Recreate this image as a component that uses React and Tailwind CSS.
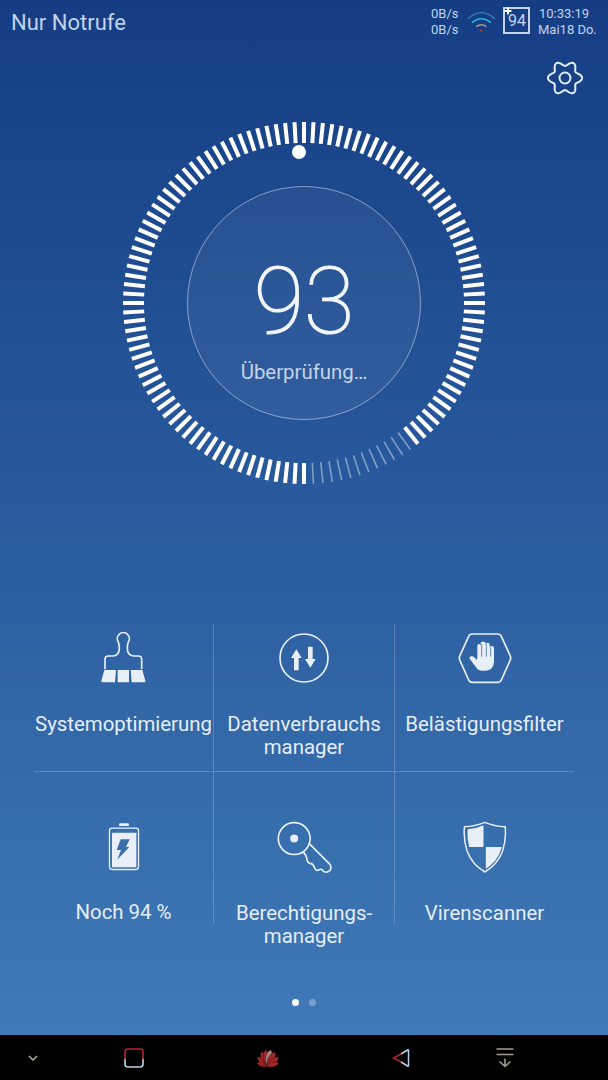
const ICON = "#e9eff7";

function gearPath() {
  const pts = [];
  for (let i = 0; i < 180; i++) {
    const t = (i / 180) * Math.PI * 2;
    const r = 14.6 + 2.5 * Math.cos(6 * t);
    pts.push(`${(20 + r * Math.cos(t)).toFixed(2)} ${(20 + r * Math.sin(t)).toFixed(2)}`);
  }
  return "M" + pts.join("L") + "Z";
}

function Gauge() {
  const ticks = [];
  for (let i = 0; i < 120; i++) {
    const a = i * 3;
    const dim = a >= 144 && a <= 177;
    ticks.push(
      <rect
        key={i}
        x={dim ? 181.2 : 180}
        y={1}
        width={dim ? 1.6 : 4}
        height={21}
        fill={dim ? "rgba(255,255,255,0.42)" : "#ffffff"}
        transform={`rotate(${a} 182 182)`}
      />
    );
  }
  return (
    <svg width="364" height="364" viewBox="0 0 364 364" className="block">
      {ticks}
      <circle cx="182" cy="182" r="116.5" fill="rgba(255,255,255,0.05)" stroke="rgba(255,255,255,0.45)" strokeWidth="1" />
      <circle cx="177" cy="31" r="7" fill="#ffffff" />
    </svg>
  );
}

const Broom = () => (
  <svg width="47" height="52" viewBox="60 36 141 156">
    <path d="M75 148V117Q75 108 85 108H100Q118 106 118 85Q118 74 115 66A18 18 0 1 1 145 66Q142 74 142 85Q142 106 160 108H175Q185 108 185 117V148" fill="none" stroke={ICON} strokeWidth="5" strokeLinejoin="round" />
    <path d="M73 150H108L105 187H68Q63 187 64 182Z M113 150H147V187H113Z M152 150H187L196 182Q197 187 192 187H155Z" fill={ICON} />
  </svg>
);
const Arrows = () => (
  <svg width="52" height="52" viewBox="0 0 156 156">
    <circle cx="78" cy="78" r="72" fill="none" stroke={ICON} strokeWidth="5" />
    <path d="M55 52L71 78H62V115H48V78H39Z" fill={ICON} />
    <path d="M95 107L79 81H88V44H102V81H111Z" fill={ICON} transform="translate(2 0)" />
  </svg>
);
const Hand = () => (
  <svg width="54" height="52" viewBox="53 24 162 156">
    <path d="M59 94L85 37Q88 30 96 30H172Q180 30 183 37L209 94Q213 102 209 110L183 168Q180 175 172 175H96Q88 175 85 168L59 110Q55 102 59 94Z" fill="none" stroke={ICON} strokeWidth="5" />
    <path d="M111 100V66Q111 60 116 60Q121 60 121 66V58Q121 53 126 53H131Q136 53 136 58V62Q137 56 142 56Q148 56 148 62V70Q149 66 155 66Q161 66 161 72V112Q161 140 135 140H125Q113 140 106 128L89 106Q85 99 92 97Q97 95 102 100L109 108Z" fill={ICON} />
    <path d="M124 60V98M138 60V98M151 70V98" stroke="#2f64a5" strokeWidth="2.2" />
  </svg>
);
const Battery = () => (
  <svg width="32" height="50" viewBox="54 38 96 150">
    <rect x="87" y="42" width="30" height="8" rx="3" fill={ICON} />
    <rect x="58.5" y="56.5" width="87" height="124" rx="8" fill="none" stroke={ICON} strokeWidth="4" />
    <rect x="66" y="70" width="73" height="104" rx="2" fill={ICON} />
    <path d="M92 90H119L108 113H118L82 151L93 122H80Z" fill="#3a70ae" />
  </svg>
);
const Key = () => (
  <svg width="55" height="53" viewBox="560 35 166 158">
    <circle cx="612" cy="87" r="48" fill="none" stroke={ICON} strokeWidth="5" />
    <circle cx="612" cy="87" r="12" fill={ICON} />
    <path d="M656 101L720 165Q726 175 719 184Q710 192 700 186Q695 176 686 182Q676 186 672 172Q668 162 660 162Q650 160 650 146Q648 138 640 128" fill="none" stroke={ICON} strokeWidth="5" strokeLinejoin="round" />
  </svg>
);
const Shield = () => (
  <svg width="44" height="52" viewBox="42 34 131 156">
    <path d="M107 38Q136 50 168 51Q172 90 160 125Q145 165 107 187Q69 165 54 125Q42 90 46 51Q78 50 107 38Z" fill="none" stroke={ICON} strokeWidth="4.5" strokeLinejoin="round" />
    <path d="M103 47V112H60Q53 85 55 59Q80 58 103 47Z" fill={ICON} />
    <path d="M110 112H158Q146 156 110 177Z" fill={ICON} />
  </svg>
);

const Wifi = () => (
  <svg width="29" height="22" viewBox="200 24 87 66">
    <path d="M203 50Q243 14 283 50" fill="none" stroke="#3f7fc0" strokeWidth="4" />
    <path d="M215 62Q243 38 271 62" fill="none" stroke="#25b6dc" strokeWidth="4.5" />
    <path d="M228 74Q243 62 258 74" fill="none" stroke="#a89a8c" strokeWidth="4.5" />
    <circle cx="243" cy="86" r="3.5" fill="#c0392b" />
  </svg>
);

const petals = [
  { a: -78, s: 0.72 },
  { a: -52, s: 0.86 },
  { a: -27, s: 0.96 },
  { a: -9, s: 1 },
  { a: 9, s: 1 },
  { a: 27, s: 0.96 },
  { a: 52, s: 0.86 },
  { a: 78, s: 0.72 },
];
const Huawei = () => (
  <svg width="26" height="20" viewBox="0 0 26 20">
    {petals.map(({ a, s }) => (
      <path
        key={a}
        d="M13 19C8 13 9 5 13 1.5C17 5 18 13 13 19Z"
        fill={a === 9 ? "#a8908a" : "#a3262b"}
        stroke="#000000"
        strokeWidth="0.3"
        transform={`rotate(${a} 13 17.5) translate(13 19) scale(${s}) translate(-13 -19)`}
      />
    ))}
  </svg>
);

const items = [
  { icon: <Broom />, label: ["Systemoptimierung"] },
  { icon: <Arrows />, label: ["Datenverbrauchs", "manager"] },
  { icon: <Hand />, label: ["Belästigungsfilter"] },
  { icon: <Battery />, label: ["Noch 94 %"] },
  { icon: <Key />, label: ["Berechtigungs-", "manager"] },
  { icon: <Shield />, label: ["Virenscanner"] },
];

function Cell({ item, top, width, divider, height }) {
  return (
    <div className={`flex flex-col items-center ${width} ${height} ${top} ${divider ? "border-r border-white/20" : ""}`}>
      <div className="flex h-[52px] items-center justify-center">{item.icon}</div>
      <div className="mt-[29px] text-center text-[20.4px] leading-[23px] whitespace-nowrap text-[#e6edf5]">
        {item.label.map((l) => (
          <div key={l}>{l}</div>
        ))}
      </div>
    </div>
  );
}

export default function App() {
  return (
    <div className="flex h-[1080px] w-[608px] flex-col overflow-hidden bg-black font-['Roboto',sans-serif]">
      <div className="flex h-[1035px] flex-col bg-gradient-to-b from-[#153d84] to-[#407ab8]">
        <div className="flex h-[44px] items-center">
          <div className="ml-[11px] w-[115px] whitespace-nowrap text-[22px] text-[#c3d3e8]">Nur Notrufe</div>
          <div className="ml-[305px] w-[32px] text-[13px] leading-[16px] text-[#c3d3e8]">
            <div>0B/s</div>
            <div>0B/s</div>
          </div>
          <div className="ml-[4px] -mt-[3px]"><Wifi /></div>
          <div className="relative ml-[7px] flex h-[27px] w-[27px] items-center justify-center border-2 border-[#c3d3e8] pt-[2px] pl-[1px] text-[16px] text-[#c3d3e8] -mt-[4px]">
            94
            <svg width="8" height="8" viewBox="0 0 8 8" className="absolute -top-[2px] -left-[1px]">
              <path d="M4 0.5V7.5M0.5 4H7.5" stroke="#ffffff" strokeWidth="2" />
            </svg>
          </div>
          <div className="ml-[8px] text-[13px] leading-[16px] text-[#c3d3e8] whitespace-nowrap">
            <div className="pl-px">10:33:19</div>
            <div>Mai18 Do.</div>
          </div>
        </div>

        <div className="mt-[14px] flex justify-end pr-[23px]">
          <svg width="40" height="40" viewBox="0 0 40 40">
            <path d={gearPath()} fill="none" stroke="#e3ebf5" strokeWidth="2" />
            <circle cx="20" cy="20" r="5.5" fill="none" stroke="#e3ebf5" strokeWidth="2" />
          </svg>
        </div>

        <div className="relative mt-[23px] ml-[122px] h-[364px] w-[364px]">
          <Gauge />
          <div className="absolute inset-0 flex flex-col items-center">
            <div className="mt-[126px] text-[92px] leading-[110px] font-thin text-[#f2f6fb] [-webkit-text-stroke:1.2px_#f2f6fb]">93</div>
            <div className="mt-[3px] text-[20.4px] leading-[24px] text-[#c3d3e8]">Überprüfung…</div>
          </div>
        </div>

        <div className="mt-[139px] ml-[34px] w-[540px]">
          <div className="flex h-[148px] border-b border-white/20">
            <Cell item={items[0]} width="w-[180px]" height="h-[147px]" top="pt-[8px]" divider />
            <Cell item={items[1]} width="w-[181px]" height="h-[147px]" top="pt-[8px]" divider />
            <Cell item={items[2]} width="w-[179px]" height="h-[147px]" top="pt-[8px]" />
          </div>
          <div className="flex h-[152px]">
            <Cell item={items[3]} width="w-[180px]" height="h-[152px]" top="pt-[49px]" divider />
            <Cell item={items[4]} width="w-[181px]" height="h-[152px]" top="pt-[49px]" divider />
            <Cell item={items[5]} width="w-[179px]" height="h-[152px]" top="pt-[49px]" />
          </div>
        </div>

        <div className="mt-[75px] flex justify-center gap-[10px] pr-[1px]">
          <div className="h-[7px] w-[7px] rounded-full bg-white"></div>
          <div className="h-[7px] w-[7px] rounded-full bg-white/30"></div>
        </div>
      </div>

      <div className="flex h-[45px] items-center bg-black">
        <svg width="10" height="6" viewBox="0 0 10 6" className="ml-[28px]">
          <path d="M1 1L5 5L9 1" fill="none" stroke="#b5ab9e" strokeWidth="1.5" />
        </svg>
        <svg width="20" height="20" viewBox="0 0 20 20" className="ml-[86px]">
          <defs>
            <linearGradient id="sq" x1="0" y1="0" x2="0" y2="1">
              <stop offset="0.5" stopColor="#b4252b" />
              <stop offset="0.62" stopColor="#c8d8ea" />
              <stop offset="1" stopColor="#b9d0ea" />
            </linearGradient>
          </defs>
          <rect x="1" y="1" width="18" height="18" rx="3" fill="none" stroke="url(#sq)" strokeWidth="1.6" />
        </svg>
        <div className="ml-[111px]"><Huawei /></div>
        <svg width="18" height="20" viewBox="0 0 18 20" className="ml-[111px]">
          <path d="M16.5 1.5V18.5" stroke="#b9d0ea" strokeWidth="1.5" />
          <path d="M16.5 1.5L9 6" stroke="#b9d0ea" strokeWidth="1.5" />
          <path d="M16.5 18.5L9 14" stroke="#b9d0ea" strokeWidth="1.5" />
          <path d="M9 6L1.5 10L9 14" fill="none" stroke="#b4252b" strokeWidth="1.5" />
        </svg>
        <svg width="18" height="21" viewBox="0 0 18 21" className="ml-[86px]">
          <path d="M0.5 2H17.5M0.5 7.5H17.5M9 11.5V19.5M3.5 14.5L9 19.5L14.5 14.5" fill="none" stroke="#a79b8d" strokeWidth="1.6" />
        </svg>
      </div>
    </div>
  );
}
